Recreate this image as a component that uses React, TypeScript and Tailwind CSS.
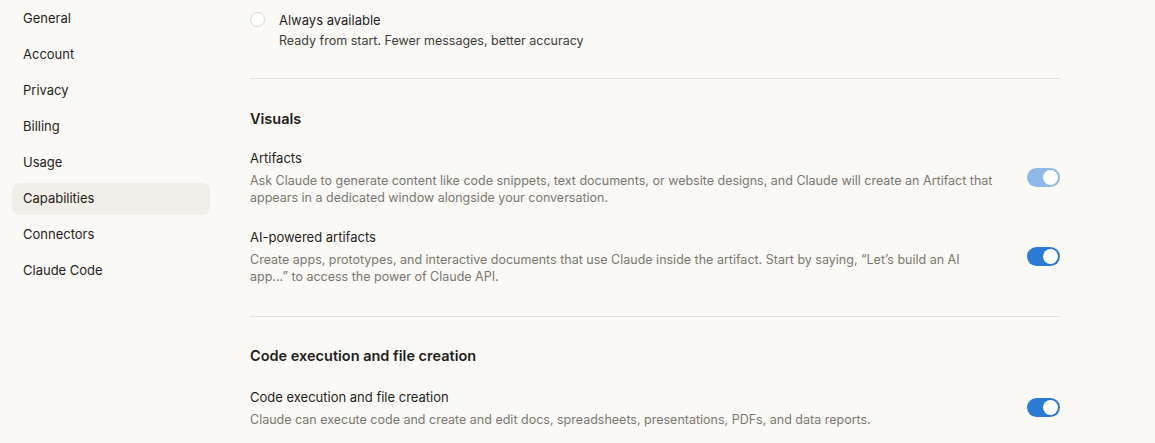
const NAV = ['General', 'Account', 'Privacy', 'Billing', 'Usage', 'Capabilities', 'Connectors', 'Claude Code']

function Toggle({ faded = false }: { faded?: boolean }) {
  return (
    <span
      className={`flex h-[19px] w-[33px] shrink-0 items-center justify-end rounded-full px-[2px] ${
        faded ? 'bg-[#8fb9e8]' : 'bg-[#2b7ad6]'
      }`}
    >
      <span className="h-[15px] w-[15px] rounded-full bg-white" />
    </span>
  )
}

function Setting({ title, desc, faded }: { title: string; desc: string; faded?: boolean }) {
  return (
    <div className="flex items-center justify-between gap-4">
      <div className="w-[746px] min-w-0">
        <p className="text-[13px] leading-[20px] text-[#1f1e1d]">{title}</p>
        <p className="mt-1 text-[12.5px] leading-[17px] text-[#797770]">{desc}</p>
      </div>
      <Toggle faded={faded} />
    </div>
  )
}

export default function App() {
  return (
    <div
      className="flex h-[443px] w-full overflow-hidden bg-[#faf9f5]"
      style={{ fontFamily: 'Inter, "Open Sans", sans-serif' }}
    >
      <nav className="flex w-[222px] shrink-0 flex-col gap-1 pl-3 pr-3 pt-[3px]">
        {NAV.map((item) => (
          <div
            key={item}
            className={`flex h-8 items-center rounded-lg px-[11px] text-[13px] text-[#1f1e1d] ${
              item === 'Capabilities' ? 'bg-[#f0eee6]' : ''
            }`}
          >
            {item}
          </div>
        ))}
      </nav>

      <main className="ml-[28px] w-[810px] shrink-0">
        <div className="flex items-start gap-[14px] pt-[10px]">
          <span className="mt-[2px] h-[15px] w-[15px] rounded-full border border-[#d9d6cd] bg-white" />
          <div>
            <p className="text-[13px] leading-[20px] text-[#1f1e1d]">Always available</p>
            <p className="mt-[1px] text-[12.5px] leading-[20px] text-[#3d3c39]">
              Ready from start. Fewer messages, better accuracy
            </p>
          </div>
        </div>

        <hr className="mt-[27px] border-[#e3e0d8]" />

        <h2 className="mt-[29px] text-[14.5px] font-semibold leading-[22px] text-[#1f1e1d]">Visuals</h2>

        <div className="mt-[18px] flex flex-col gap-[21px]">
          <Setting
            faded
            title="Artifacts"
            desc="Ask Claude to generate content like code snippets, text documents, or website designs, and Claude will create an Artifact that appears in a dedicated window alongside your conversation."
          />
          <Setting
            title="AI-powered artifacts"
            desc="Create apps, prototypes, and interactive documents that use Claude inside the artifact. Start by saying, “Let’s build an AI app...” to access the power of Claude API."
          />
        </div>

        <hr className="mt-[31px] border-[#e3e0d8]" />

        <h2 className="mt-[28px] text-[14.5px] font-semibold leading-[22px] text-[#1f1e1d]">
          Code execution and file creation
        </h2>

        <div className="mt-[20px]">
          <Setting
            title="Code execution and file creation"
            desc="Claude can execute code and create and edit docs, spreadsheets, presentations, PDFs, and data reports."
          />
        </div>
      </main>
    </div>
  )
}
